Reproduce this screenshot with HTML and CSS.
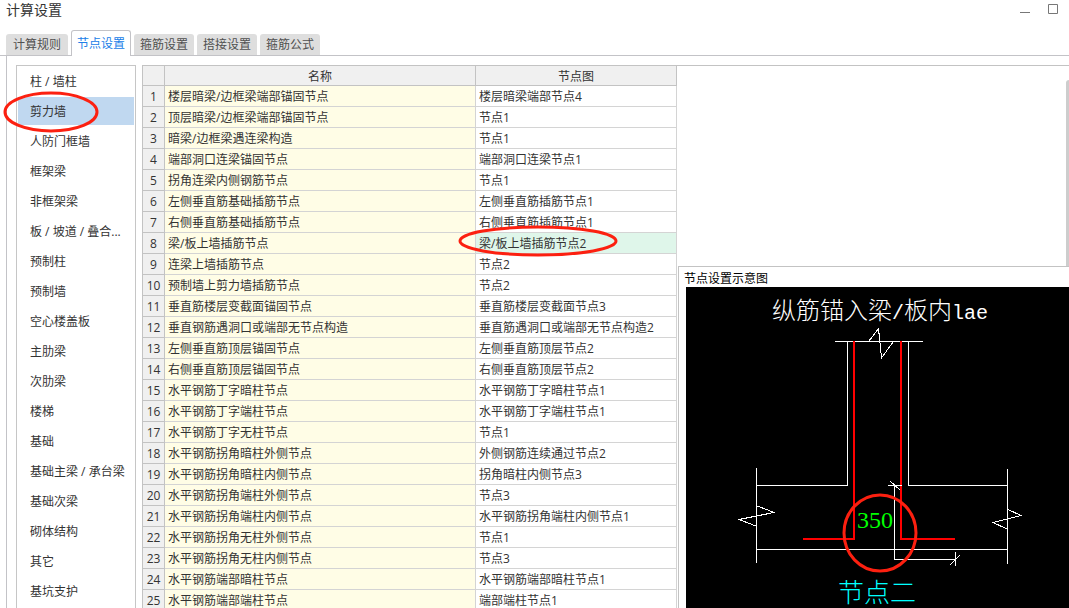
FILE: index.html
```html
<!DOCTYPE html>
<html lang="zh-CN">
<head>
<meta charset="utf-8">
<title>计算设置</title>
<link rel="stylesheet" href="styles.css">
</head>
<body>
<div class="window">
  <header class="titlebar">
    <h1 class="title">计算设置</h1>
    <div class="controls">
      <button class="control" type="button" aria-label="最小化"><svg width="11" height="11"><path d="M0 8.5H10" stroke="#777"/></svg></button>
      <button class="control" type="button" aria-label="最大化"><svg width="11" height="11"><path d="M.5.5H9.5V9.5H.5Z" stroke="#777" fill="none"/></svg></button>
    </div>
  </header>
  <div class="tabs" role="tablist">
    <button class="tab" role="tab" type="button">计算规则</button>
    <button class="tab active" role="tab" type="button" aria-selected="true">节点设置</button>
    <button class="tab" role="tab" type="button">箍筋设置</button>
    <button class="tab" role="tab" type="button">搭接设置</button>
    <button class="tab" role="tab" type="button">箍筋公式</button>
  </div>
  <div class="content">
    <nav class="sidebar">
      <button class="item" type="button">柱 / 墙柱</button>
      <button class="item selected" type="button">剪力墙<svg class="ring item-ring" width="98" height="42"><ellipse cx="49" cy="21" rx="46" ry="19"/></svg></button>
      <button class="item" type="button">人防门框墙</button>
      <button class="item" type="button">框架梁</button>
      <button class="item" type="button">非框架梁</button>
      <button class="item" type="button">板 / 坡道 / 叠合...</button>
      <button class="item" type="button">预制柱</button>
      <button class="item" type="button">预制墙</button>
      <button class="item" type="button">空心楼盖板</button>
      <button class="item" type="button">主肋梁</button>
      <button class="item" type="button">次肋梁</button>
      <button class="item" type="button">楼梯</button>
      <button class="item" type="button">基础</button>
      <button class="item" type="button">基础主梁 / 承台梁</button>
      <button class="item" type="button">基础次梁</button>
      <button class="item" type="button">砌体结构</button>
      <button class="item" type="button">其它</button>
      <button class="item" type="button">基坑支护</button>
    </nav>
    <main class="main">
      <table class="grid">
        <colgroup><col class="col-no"><col class="col-name"><col class="col-node"></colgroup>
        <thead><tr><th></th><th>名称</th><th>节点图</th></tr></thead>
        <tbody>
          <tr><th>1</th><td>楼层暗梁/边框梁端部锚固节点</td><td>楼层暗梁端部节点4</td></tr>
          <tr><th>2</th><td>顶层暗梁/边框梁端部锚固节点</td><td>节点1</td></tr>
          <tr><th>3</th><td>暗梁/边框梁遇连梁构造</td><td>节点1</td></tr>
          <tr><th>4</th><td>端部洞口连梁锚固节点</td><td>端部洞口连梁节点1</td></tr>
          <tr><th>5</th><td>拐角连梁内侧钢筋节点</td><td>节点1</td></tr>
          <tr><th>6</th><td>左侧垂直筋基础插筋节点</td><td>左侧垂直筋插筋节点1</td></tr>
          <tr><th>7</th><td>右侧垂直筋基础插筋节点</td><td>右侧垂直筋插筋节点1</td></tr>
          <tr><th>8</th><td>梁/板上墙插筋节点</td><td class="current">梁/板上墙插筋节点2<svg class="ring cell-ring" width="160" height="34"><ellipse cx="80" cy="17" rx="78" ry="14"/></svg></td></tr>
          <tr><th>9</th><td>连梁上墙插筋节点</td><td>节点2</td></tr>
          <tr><th>10</th><td>预制墙上剪力墙插筋节点</td><td>节点2</td></tr>
          <tr><th>11</th><td>垂直筋楼层变截面锚固节点</td><td>垂直筋楼层变截面节点3</td></tr>
          <tr><th>12</th><td>垂直钢筋遇洞口或端部无节点构造</td><td>垂直筋遇洞口或端部无节点构造2</td></tr>
          <tr><th>13</th><td>左侧垂直筋顶层锚固节点</td><td>左侧垂直筋顶层节点2</td></tr>
          <tr><th>14</th><td>右侧垂直筋顶层锚固节点</td><td>右侧垂直筋顶层节点2</td></tr>
          <tr><th>15</th><td>水平钢筋丁字暗柱节点</td><td>水平钢筋丁字暗柱节点1</td></tr>
          <tr><th>16</th><td>水平钢筋丁字端柱节点</td><td>水平钢筋丁字端柱节点1</td></tr>
          <tr><th>17</th><td>水平钢筋丁字无柱节点</td><td>节点1</td></tr>
          <tr><th>18</th><td>水平钢筋拐角暗柱外侧节点</td><td>外侧钢筋连续通过节点2</td></tr>
          <tr><th>19</th><td>水平钢筋拐角暗柱内侧节点</td><td>拐角暗柱内侧节点3</td></tr>
          <tr><th>20</th><td>水平钢筋拐角端柱外侧节点</td><td>节点3</td></tr>
          <tr><th>21</th><td>水平钢筋拐角端柱内侧节点</td><td>水平钢筋拐角端柱内侧节点1</td></tr>
          <tr><th>22</th><td>水平钢筋拐角无柱外侧节点</td><td>节点1</td></tr>
          <tr><th>23</th><td>水平钢筋拐角无柱内侧节点</td><td>节点3</td></tr>
          <tr><th>24</th><td>水平钢筋端部暗柱节点</td><td>水平钢筋端部暗柱节点1</td></tr>
          <tr><th>25</th><td>水平钢筋端部端柱节点</td><td>端部端柱节点1</td></tr>
        </tbody>
      </table>
      <div class="scrollbar"></div>
    </main>
  </div>
  <section class="preview">
    <h2 class="preview-title">节点设置示意图</h2>
    <div class="drawing">
      <svg width="383" height="321" viewBox="686 287 383 321">
        <text class="cad" x="772" y="319" fill="#fff">纵筋锚入梁<tspan class="cad-latin">/</tspan>板内<tspan class="cad-latin">lae</tspan></text>
        <g fill="none" stroke="#fff" shape-rendering="crispEdges">
          <path d="M835 341.5H923M869 341L878.5 328.5L881.5 358L893 342"/>
          <path d="M847.5 341V485.5H756M908.5 341V485.5H1007"/>
          <path d="M756.5 468V563M1007.5 469V564M756 549.5H1008"/>
          <path d="M756 505.5L774 512.5L739 519.5L756 526"/>
          <path d="M1007 509L1021 515.5L993 522.5L1007 529"/>
        </g>
        <path d="M854 341V539M803 539H855M901 341V539M900 539H955" fill="none" stroke="#f00" stroke-width="2" shape-rendering="crispEdges"/>
        <path d="M888 485.5H902M890 481L900 490M894.5 485V559.5H956M955.5 552V566M950 565L960 555" fill="none" stroke="#fff" shape-rendering="crispEdges"/>
        <text class="cad-number" x="857" y="528" fill="#0f0">350</text>
        <text class="cad cad-label" x="838" y="602" fill="#0ff">节点二</text>
        <ellipse class="mark" cx="880" cy="533" rx="36" ry="38"/>
      </svg>
    </div>
  </section>
</div>
</body>
</html>
```
FILE: styles.css
```css
* { box-sizing: border-box; }

body {
  margin: 0;
  background: #fff;
  color: #333;
  font: 12px/20px "Open Sans", "Noto Sans CJK SC", sans-serif;
}

button {
  border: 0;
  padding: 0;
  background: none;
  color: inherit;
  font: inherit;
}

.window {
  position: relative;
  display: flex;
  flex-direction: column;
  height: 100vh;
  overflow: hidden;
}

.titlebar {
  display: flex;
  justify-content: space-between;
  height: 30px;
  padding: 0 10px 0 6px;
}

.title {
  margin: 0;
  font-size: 14px;
  font-weight: 400;
  line-height: 20px;
}

.controls {
  display: flex;
  gap: 17px;
  padding-top: 4px;
}

.control { height: 11px; }
.control svg { display: block; }

.tabs {
  display: flex;
  align-items: flex-end;
  gap: 3px;
  height: 26px;
  padding-left: 6px;
  border-bottom: 1px solid #c3c3c7;
}

.tab {
  width: 62px;
  height: 21px;
  border-radius: 3px 3px 0 0;
  background: #dedede;
  color: #505050;
}

.tab.active {
  width: 60px;
  height: 26px;
  margin-bottom: -1px;
  border: 1px solid #c3c3c7;
  border-bottom: 0;
  background: #fff;
  color: #2080e8;
}

.tab.active ~ .tab { width: 60px; }

.content {
  display: flex;
  flex: 1;
  min-height: 0;
  gap: 6px;
  margin-left: 6px;
  padding: 9px 0 0 9px;
  border-left: 1px solid #c3c3c7;
}

.sidebar {
  display: flex;
  flex-direction: column;
  gap: 2px;
  width: 120px;
  flex: none;
  padding: 1px;
  border: 1px solid #c6c6c6;
  border-bottom: 0;
}

.item {
  position: relative;
  flex: none;
  height: 28px;
  padding: 2px 0 0 12px;
  text-align: left;
  white-space: nowrap;
}

.selected { background: #c0d8f0; }

.ring, .mark {
  fill: none;
  stroke: #fc2010;
  stroke-width: 3;
}

.ring {
  position: absolute;
  z-index: 1;
  pointer-events: none;
}

.item-ring { left: -16px; top: -6px; }
.cell-ring { left: -18px; top: -9px; }

.main {
  display: flex;
  flex: 1;
  justify-content: space-between;
  border-top: 1px solid #c3c3c3;
}

.grid {
  width: 535px;
  align-self: flex-start;
  table-layout: fixed;
  border-collapse: separate;
  border-spacing: 0;
  border-left: 1px solid #c3c3c3;
}

.col-no { width: 22px; }
.col-name { width: 311px; }

.grid th, .grid td {
  position: relative;
  height: 21px;
  padding: 2px 0 0 3px;
  border-right: 1px solid #d4d4d4;
  border-bottom: 1px solid #d4d4d4;
  line-height: 18px;
  text-align: left;
  font-weight: 400;
  white-space: nowrap;
}

.grid th {
  padding: 2px 0 0;
  border-color: #c3c3c3;
  background: #f0f0f0;
  text-align: center;
}

.grid thead th { height: 20px; line-height: 17px; }
.grid td:nth-child(2) { background: #fffde6; }
.grid .current { background: #dff6ea; }

.scrollbar {
  width: 3px;
  margin-top: 14px;
  border-radius: 3px 0 0 0;
  background: #cdcdcd;
}

.preview {
  position: absolute;
  top: 266px;
  right: 0;
  bottom: 0;
  left: 678px;
  padding-left: 7px;
  border-top: 1px solid #c3c3c3;
  border-left: 1px solid #c3c3c3;
  background: #fff;
}

.preview-title {
  height: 20px;
  margin: 0 0 0 -2px;
  color: #000;
  font-size: 12px;
  font-weight: 400;
  line-height: 24px;
}

.drawing { height: 100%; background: #000; }
.drawing svg { display: block; }

.cad {
  font: 300 24px "Noto Sans CJK SC", sans-serif;
}

.cad-latin { font: 20px "Liberation Mono", monospace; }
.cad-label { font-size: 26px; }
.cad-number { font: 24px "Liberation Serif", serif; }
```
